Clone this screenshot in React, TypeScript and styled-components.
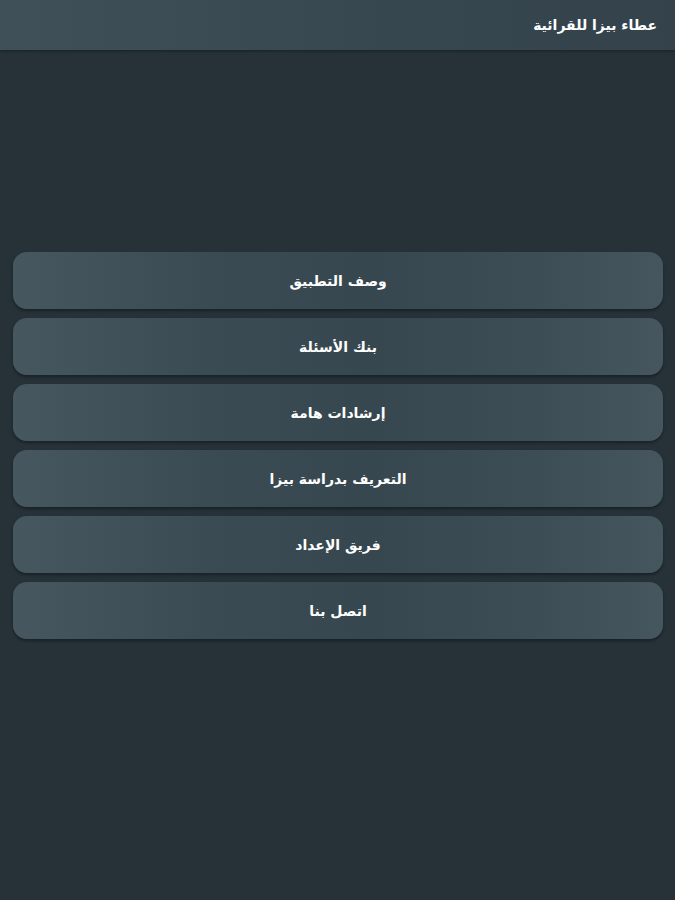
import React from "react";
import styled, { createGlobalStyle } from "styled-components";

const GlobalStyle = createGlobalStyle`
  html, body {
    margin: 0;
    padding: 0;
    background-color: #263238;
  }
  body {
    font-family: "DejaVu Sans", "Noto Sans", sans-serif;
  }
`;

const items = [
  "وصف التطبيق",
  "بنك الأسئلة",
  "إرشادات هامة",
  "التعريف بدراسة بيزا",
  "فريق الإعداد",
  "اتصل بنا",
];

export default function App() {
  return (
    <Page dir="rtl">
      <GlobalStyle />
      <Header>
        <Title>عطاء بيزا للقرائية</Title>
      </Header>
      <Menu>
        {items.map((label) => (
          <MenuButton key={label}>{label}</MenuButton>
        ))}
      </Menu>
    </Page>
  );
}

const Page = styled.div`
  min-height: 900px;
  background-color: #263238;
`;

const Header = styled.div`
  height: 50px;
  display: flex;
  align-items: center;
  padding: 0 18px;
  background: linear-gradient(90deg, #3f5059 0%, #37474f 60%, #34434b 100%);
  box-shadow: 0 1px 3px rgba(0, 0, 0, 0.35);
`;

const Title = styled.h1`
  margin: 0;
  font-size: 14px;
  font-weight: bold;
  color: #ffffff;
`;

const Menu = styled.div`
  display: flex;
  flex-direction: column;
  gap: 9px;
  padding: 202px 12px 0 13px;
`;

const MenuButton = styled.button`
  height: 57px;
  border: none;
  border-radius: 14px;
  font-family: "DejaVu Sans", "Noto Sans", sans-serif;
  font-size: 14px;
  font-weight: bold;
  color: #ffffff;
  background: linear-gradient(
    90deg,
    #46575f 0%,
    #3b4b53 30%,
    #37474f 55%,
    #3d4d55 80%,
    #45565e 100%
  );
  box-shadow: 0 2px 3px rgba(0, 0, 0, 0.35);
  cursor: pointer;
`;
